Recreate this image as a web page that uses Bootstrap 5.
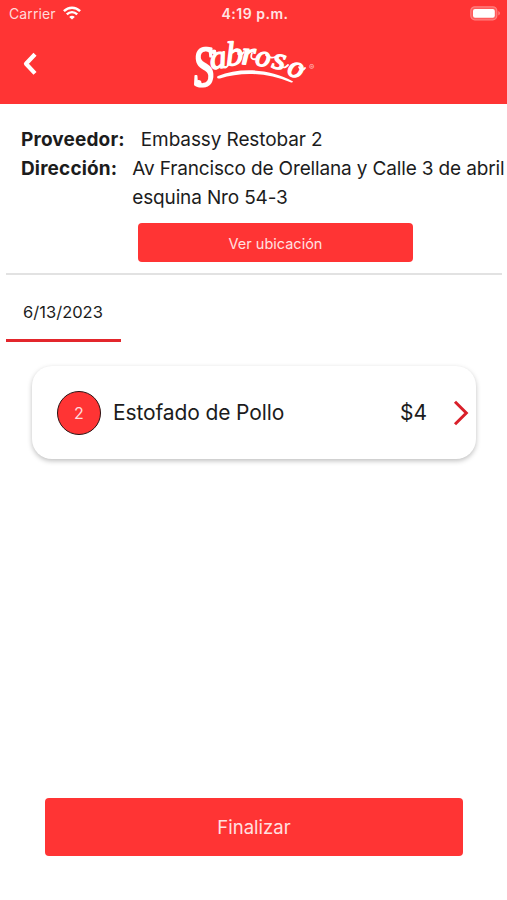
<!DOCTYPE html>
<html lang="es">
<head>
<meta charset="utf-8">
<meta name="viewport" content="width=device-width, initial-scale=1">
<title>Sabroso</title>
<link href="https://cdn.jsdelivr.net/npm/bootstrap@5.3.0/dist/css/bootstrap.min.css" rel="stylesheet">
<style>
:root { --brand: #ff3434; --ink: #1c1c1c; }
body { font-family: Inter, "Liberation Sans", sans-serif; color: var(--ink); width: 507px; height: 900px; overflow: hidden; }
svg { display: block; }
.app-head { background: var(--brand); height: 103.5px; }
.status { height: 27px; padding: 0 6px 0 9px; color: #ffdada; font-size: 14px; letter-spacing: .1px; display: grid; grid-template-columns: 1fr auto 1fr; }
.wifi { margin-left: 7px; margin-top: -1px; }
.clock { font-weight: 600; font-size: 14px; letter-spacing: .5px; color: #ffe4e4; }
.title-row { height: 74px; display: grid; grid-template-columns: 185px 140px 1fr; align-items: start; }
.back { margin: 25px 0 0 21px; }
.logo { margin-top: 3px; overflow: visible; }
.info { padding: 21px 0 0 21px; font-size: 19px; line-height: 29.3px; }
.info dt { font-weight: 700; letter-spacing: .15px; }
.info dd { margin: 0 0 0 16px; letter-spacing: -.11px; }
.info .address { margin-left: 15px; letter-spacing: -.15px; }
.btn-brand, .btn-brand:hover { background: var(--brand); color: #ffe0e0; border: 0; border-radius: 4px; }
.btn-place { width: 275px; height: 39px; margin: 11px 0 0 138px; font-size: 14.5px; padding: 2px 0 0; }
.rule { height: 2px; background: #e2e2e2; margin: 11px 5px 0 6px; }
.day { width: 115px; height: 67px; margin-left: 6px; border-bottom: 3px solid #e3262c; font-size: 16.5px; padding: 10px 1px 0 0; }
.dish { width: 444px; height: 93px; margin: 24px 0 0 32px; border: 0; border-radius: 20px; box-shadow: 0 2px 5px rgba(0,0,0,.25); padding: 0 7px 0 25px; font-size: 21px; }
.dish-name { letter-spacing: -.12px; }
.arrow { margin-left: 26px; }
.qty { width: 44px; height: 44px; background: var(--brand); border: 1.5px solid #2b1212; color: #ffdcdc; font-size: 16px; margin-right: 12px; }
.btn-end { width: 418px; height: 58px; margin: 0 0 44px 45px; font-size: 18.5px; padding: 2px 0 0; }
</style>
</head>
<body class="d-flex flex-column bg-white">
<header class="app-head">
  <div class="status align-items-center">
    <div class="d-flex align-items-center"><span>Carrier</span>
      <svg class="wifi" width="18" height="14" viewBox="0 0 18 14" fill="none" stroke="#fff" stroke-width="2.4"><path d="M.9 5.2C5.5.6 12.5.6 17.1 5.2"/><path d="M3.800 8.300c3-2.900 7.400-2.900 10.400 0"/><path d="M9 13.500 6.200 10.900c1.600-1.400 4-1.400 5.600 0z" fill="#fff" stroke="none"/></svg>
    </div>
    <span class="clock">4:19 p.m.</span>
    <svg class="ms-auto" width="31" height="15" viewBox="0 0 31 15"><rect x=".8" y=".8" width="26" height="13" rx="4" fill="#ff5c5c" stroke="#ff8080" stroke-width="1.2"/><rect x="3" y="3" width="21.800" height="8.800" rx="2" fill="#fff"/><path d="M28.400 5c2 .8 2 3.600 0 4.400z" fill="#ff8989"/></svg>
  </div>
  <div class="title-row">
    <svg class="back" width="17" height="24" viewBox="0 0 17 24" fill="none" stroke="#fff" stroke-width="4.200" stroke-linejoin="round"><path d="m14 2.200-9 9.600 9 9.600"/></svg>
    <svg class="logo" width="140" height="70" viewBox="0 0 140 70" role="img" aria-label="Sabroso" fill="#fff">
      <g font-family="Liberation Serif, serif" font-style="italic" stroke="#fff" stroke-width="1.4" stroke-linejoin="round">
        <text transform="translate(9.500 56.500) rotate(-4) scale(.72 1)" font-size="57" stroke-width="2.200">S</text>
        <text transform="translate(26 39.500) rotate(-8)" font-size="34">a</text>
        <text transform="translate(41.500 35.500) rotate(-3)" font-size="34">b</text>
        <text transform="translate(56 34) rotate(3) scale(1.100 1)" font-size="33">r</text>
        <text transform="translate(69.500 35) rotate(8)" font-size="30">o</text>
        <text transform="translate(86 37.500) rotate(12) scale(1.100 1)" font-size="31">s</text>
        <text transform="translate(101 44) rotate(20)" font-size="31">o</text>
      </g>
      <g fill="none" stroke="#fff" stroke-width="1.800" stroke-linecap="round">
        <path d="M40 37.500c2 0 3-2 4-4"/><path d="M53 24c2 1 4 1 6-2"/><path d="M67 23c-2 5 0 7 4 6"/><path d="M81 25c3 3 6 3 9 2"/><path d="M97 37c3 1 4 0 6-2"/><path d="M114 37c1 3 4 4 6 1"/>
      </g>
      <circle cx="13.500" cy="53" r="3"/><circle cx="29" cy="22" r="2.400"/>
      <path d="M33 46C54 37.500 84 38 108 51.500c-.4 1.200-1.500 1.300-2.500.8C83 42.500 56 41.500 35 48.500c-2.500.6-4-1.500-2-2.500z"/>
      <text x="124" y="40" font-family="Inter, sans-serif" font-size="8" fill="#ffc0c0">®</text>
    </svg>
  </div>
</header>

<main class="flex-grow-1 d-flex flex-column">
  <dl class="info mb-0">
    <div class="d-flex"><dt>Proveedor:</dt><dd>Embassy Restobar 2</dd></div>
    <div class="d-flex"><dt>Dirección:</dt><dd class="address text-nowrap">Av Francisco de Orellana y Calle 3 de abril<br>esquina Nro 54-3</dd></div>
  </dl>
  <button class="btn btn-brand btn-place" type="button">Ver ubicación</button>
  <div class="rule"></div>
  <div class="day d-flex align-items-center justify-content-center">6/13/2023</div>
  <div class="card dish flex-row align-items-center">
    <span class="qty rounded-circle d-flex align-items-center justify-content-center">2</span>
    <span class="dish-name">Estofado de Pollo</span>
    <span class="ms-auto">$4</span>
    <svg class="arrow" width="16" height="26" viewBox="0 0 16 26" fill="none" stroke="#d9202a" stroke-width="3"><path d="m2 1.800 11.300 11.200L2 24.200"/></svg>
  </div>
  <button class="btn btn-brand btn-end mt-auto" type="button">Finalizar</button>
</main>
<script src="https://cdn.jsdelivr.net/npm/bootstrap@5.3.0/dist/js/bootstrap.bundle.min.js"></script>
</body>
</html>
